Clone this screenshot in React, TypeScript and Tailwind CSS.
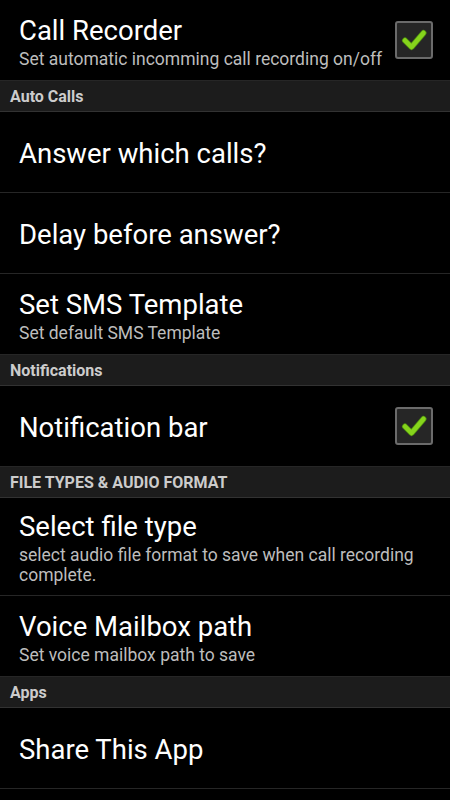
import React from "react";

type Item =
  | { kind: "header"; label: string }
  | { kind: "pref"; title: string; summary?: string; checked?: boolean; tall?: boolean };

const items: Item[] = [
  { kind: "pref", title: "Call Recorder", summary: "Set automatic incomming call recording on/off", checked: true },
  { kind: "header", label: "Auto Calls" },
  { kind: "pref", title: "Answer which calls?" },
  { kind: "pref", title: "Delay before answer?" },
  { kind: "pref", title: "Set SMS Template", summary: "Set default SMS Template" },
  { kind: "header", label: "Notifications" },
  { kind: "pref", title: "Notification bar", checked: true },
  { kind: "header", label: "FILE TYPES & AUDIO FORMAT" },
  {
    kind: "pref",
    title: "Select file type",
    summary: "select audio file format to save when call recording complete.",
    tall: true,
  },
  { kind: "pref", title: "Voice Mailbox path", summary: "Set voice mailbox path to save" },
  { kind: "header", label: "Apps" },
  { kind: "pref", title: "Share This App" },
];

function CheckBox() {
  return (
    <div className="w-[38px] h-[38px] shrink-0 rounded-[3px] border-2 border-[#6b6b6b] bg-[#262626] flex items-center justify-center">
      <svg width="34" height="34" viewBox="0 0 34 34">
        <path
          d="M8 17.5 L14.5 24 L26.5 10"
          fill="none"
          stroke="#4f8f10"
          strokeWidth="6"
          strokeLinecap="round"
          strokeLinejoin="round"
        />
        <path
          d="M8 17.5 L14.5 24 L26.5 10"
          fill="none"
          stroke="#86d41c"
          strokeWidth="4.5"
          strokeLinecap="round"
          strokeLinejoin="round"
        />
      </svg>
    </div>
  );
}

export default function App() {
  return (
    <div className="w-[450px] h-[800px] bg-black overflow-hidden font-['Roboto',sans-serif]">
      {items.map((it, i) =>
        it.kind === "header" ? (
          <div
            key={i}
            className="h-[31px] bg-[#1c1c1c] border-b border-[#323232] pl-[10px] pt-[2px] flex items-center text-[16px] font-bold text-[#cccccc] leading-none"
          >
            {it.label}
          </div>
        ) : (
          <div
            key={i}
            className={`${it.tall ? "h-[98px]" : "h-[81px]"} border-b border-[#262626] pl-[19px] pr-[17px] pt-[3px] flex items-center justify-between`}
          >
            <div className="flex flex-col pr-[4px]">
              <div className="text-[27.5px] leading-[32px] text-white">{it.title}</div>
              {it.summary && (
                <div className="mt-[2px] text-[17.5px] leading-[20px] text-[#bdbdbd]">{it.summary}</div>
              )}
            </div>
            {it.checked && (
              <div className="-mt-[3px]">
                <CheckBox />
              </div>
            )}
          </div>
        )
      )}
    </div>
  );
}
